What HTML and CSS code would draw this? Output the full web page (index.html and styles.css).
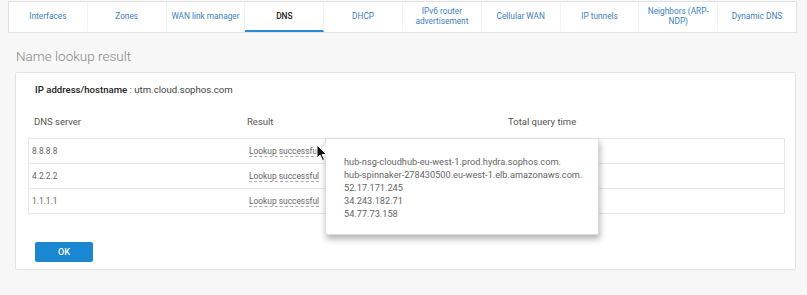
FILE: index.html
```html
<!DOCTYPE html>
<html lang="en">
<head>
    <meta charset="UTF-8">
    <meta name="viewport" content="width=device-width, initial-scale=1.0">
    <title>DNS - Name lookup result</title>
    <link rel="stylesheet" href="styles.css">
</head>
<body>
    <nav class="tabs">
        <a class="tab">Interfaces</a>
        <a class="tab">Zones</a>
        <a class="tab">WAN link manager</a>
        <a class="tab active">DNS</a>
        <a class="tab">DHCP</a>
        <a class="tab">IPv6 router advertisement</a>
        <a class="tab">Cellular WAN</a>
        <a class="tab">IP tunnels</a>
        <a class="tab">Neighbors (ARP-NDP)</a>
        <a class="tab last">Dynamic DNS</a>
    </nav>

    <h2 class="page-title">Name lookup result</h2>

    <div class="panel">
        <div class="host-line">
            <span class="host-label">IP address/hostname</span> : utm.cloud.sophos.com
        </div>

        <div class="table-head">
            <div class="col-server">DNS server</div>
            <div class="col-result">Result</div>
            <div class="col-time">Total query time</div>
        </div>

        <div class="results">
            <div class="row">
                <div class="col-server">8.8.8.8</div>
                <div class="col-result">
                    <span class="lookup">Lookup successful</span>
                    <div class="tooltip">
                        <div>hub-nsg-cloudhub-eu-west-1.prod.hydra.sophos.com.</div>
                        <div>hub-spinnaker-278430500.eu-west-1.elb.amazonaws.com.</div>
                        <div>52.17.171.245</div>
                        <div>34.243.182.71</div>
                        <div>54.77.73.158</div>
                    </div>
                    <svg class="cursor" width="13" height="18" viewBox="0 0 13 18">
                        <path d="M1 1 L1 14 L4 11 L6.5 16.5 L8.5 15.5 L6 10.5 L10.5 10.5 Z" fill="#111" stroke="#fff" stroke-width="1"/>
                    </svg>
                </div>
                <div class="col-time"></div>
            </div>
            <div class="row">
                <div class="col-server">4.2.2.2</div>
                <div class="col-result"><span class="lookup">Lookup successful</span></div>
                <div class="col-time"></div>
            </div>
            <div class="row">
                <div class="col-server">1.1.1.1</div>
                <div class="col-result"><span class="lookup">Lookup successful</span></div>
                <div class="col-time"></div>
            </div>
        </div>

        <button class="btn-ok" type="button">OK</button>
    </div>
</body>
</html>
```

FILE: styles.css
```css
body {
    margin: 0;
    background-color: #f7f7f7;
    font-family: Roboto, "Liberation Sans", sans-serif;
    color: #555;
}
.tabs {
    display: flex;
    margin: 1px 10px 0 8px;
    height: 30px;
    background-color: white;
    border: 1px solid #e2e2e2;
}
.tab {
    flex: 1;
    display: flex;
    align-items: center;
    justify-content: center;
    text-align: center;
    padding: 0 4px;
    font-size: 8.3px;
    line-height: 10px;
    color: #3d7fc0;
    border-right: 1px solid #f3f3f3;
    border-bottom: 2px solid transparent;
}
.tab.last {
    border-right: none;
}
.tab.active {
    color: #222;
    font-weight: 500;
    border-bottom-color: #2b8ad8;
}
.page-title {
    margin: 14px 0 0 16px;
    font-size: 13.5px;
    font-weight: 300;
    color: #888;
    line-height: 18px;
}
.panel {
    position: relative;
    margin: 7px 11px 0 15px;
    height: 196px;
    padding: 0 10px 0 12px;
    background-color: white;
    border: 1px solid #e3e3e3;
    border-radius: 2px;
}
.host-line {
    margin: 11px 0 0 7px;
    font-size: 9.6px;
    color: #444;
}
.host-label {
    font-weight: 500;
    color: #222;
}
.table-head {
    display: flex;
    margin-top: 21px;
    padding: 0 0 0 6px;
    font-size: 9.5px;
    color: #555;
    height: 15px;
}
.col-server {
    width: 213px;
}
.col-result {
    position: relative;
    width: 261px;
}
.results {
    margin-top: 7px;
    border: 1px solid #e6e6e6;
}
.row {
    display: flex;
    align-items: center;
    height: 24px;
    padding-left: 3px;
    font-size: 8.4px;
    color: #666;
    border-bottom: 1px solid #e6e6e6;
}
.row:last-child {
    border-bottom: none;
}
.row .col-server {
    width: 217px;
}
.lookup {
    border-bottom: 1px dashed #aaa;
}
.tooltip {
    position: absolute;
    left: 76px;
    top: -8px;
    z-index: 2;
    width: 254px;
    height: 71px;
    padding: 16px 0 8px 18px;
    font-size: 9.2px;
    line-height: 13px;
    color: #666;
    background-color: white;
    border: 1px solid #ddd;
    border-radius: 2px;
    box-shadow: 1px 4px 6px rgba(0, 0, 0, 0.3);
}
.tooltip::before {
    content: "";
    position: absolute;
    left: -5px;
    top: 6px;
    width: 8px;
    height: 8px;
    background-color: white;
    border-left: 1px solid #ddd;
    border-bottom: 1px solid #ddd;
    transform: rotate(45deg);
}
.cursor {
    position: absolute;
    left: 67px;
    top: -2px;
    z-index: 3;
}
.btn-ok {
    margin: 28px 0 0 7px;
    width: 58px;
    height: 20px;
    font-family: Roboto, "Liberation Sans", sans-serif;
    font-size: 9px;
    font-weight: 500;
    color: white;
    background-color: #1a87d0;
    border: none;
    border-radius: 2px;
}
```
